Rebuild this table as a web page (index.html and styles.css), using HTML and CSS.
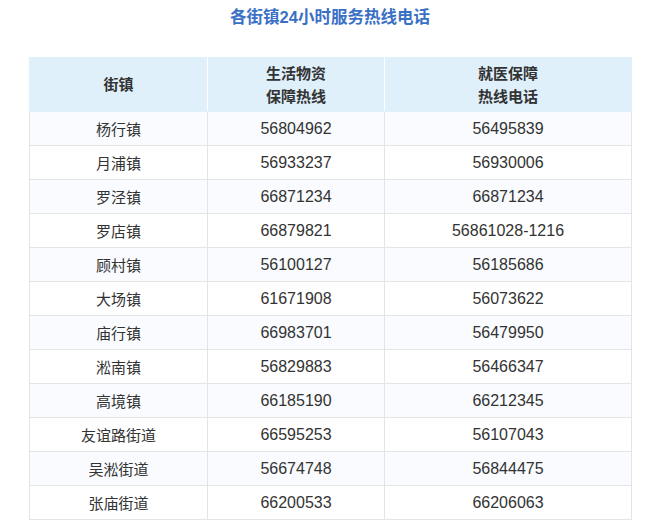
FILE: index.html
```html
<!DOCTYPE html>
<html lang="zh">
<head>
<meta charset="utf-8">
<link rel="stylesheet" href="styles.css">
</head>
<body>
<div class="page">
  <h1 class="title">各街镇24小时服务热线电话</h1>
  <table class="hotline">
    <colgroup>
      <col class="c1">
      <col class="c2">
      <col class="c3">
    </colgroup>
    <thead>
      <tr>
        <th>街镇</th>
        <th>生活物资<br>保障热线</th>
        <th>就医保障<br>热线电话</th>
      </tr>
    </thead>
    <tbody>
      <tr><td>杨行镇</td><td>56804962</td><td>56495839</td></tr>
      <tr><td>月浦镇</td><td>56933237</td><td>56930006</td></tr>
      <tr><td>罗泾镇</td><td>66871234</td><td>66871234</td></tr>
      <tr><td>罗店镇</td><td>66879821</td><td>56861028-1216</td></tr>
      <tr><td>顾村镇</td><td>56100127</td><td>56185686</td></tr>
      <tr><td>大场镇</td><td>61671908</td><td>56073622</td></tr>
      <tr><td>庙行镇</td><td>66983701</td><td>56479950</td></tr>
      <tr><td>淞南镇</td><td>56829883</td><td>56466347</td></tr>
      <tr><td>高境镇</td><td>66185190</td><td>66212345</td></tr>
      <tr><td>友谊路街道</td><td>66595253</td><td>56107043</td></tr>
      <tr><td>吴淞街道</td><td>56674748</td><td>56844475</td></tr>
      <tr><td>张庙街道</td><td>66200533</td><td>66206063</td></tr>
    </tbody>
  </table>
</div>
</body>
</html>
```

FILE: styles.css
```css
html, body {
  margin: 0;
  padding: 0;
  background: #ffffff;
}
body {
  font-family: "Liberation Sans", "Noto Sans CJK SC", sans-serif;
  color: #333333;
}
.page {
  padding: 5px 29px 0 29px;
}
.title {
  margin: 0;
  height: 24px;
  line-height: 24px;
  text-align: center;
  font-size: 16.5px;
  font-weight: bold;
  color: #3a6fc6;
}
.hotline {
  margin-top: 28px;
  width: 602px;
  border-collapse: collapse;
  table-layout: fixed;
}
.c1 { width: 178px; }
.c2 { width: 177px; }
.c3 { width: 247px; }
.hotline th {
  height: 53px;
  padding: 0;
  background: #dff0fb;
  border: 1px solid #dff0fb;
  border-left-color: #ffffff;
  border-right-color: #ffffff;
  font-size: 15px;
  font-weight: bold;
  line-height: 23px;
  color: #333333;
}
.hotline th:first-child { border-left-color: #dff0fb; }
.hotline th:last-child { border-right-color: #dff0fb; }
.hotline td {
  height: 33px;
  padding: 0;
  text-align: center;
  font-size: 16px;
  background: #f9fbfe;
  border: 1px solid #e3e4e6;
  color: #333333;
}
.hotline td:first-child {
  font-size: 15px;
}
.hotline tbody tr:nth-child(even) td {
  background: #ffffff;
}
```
